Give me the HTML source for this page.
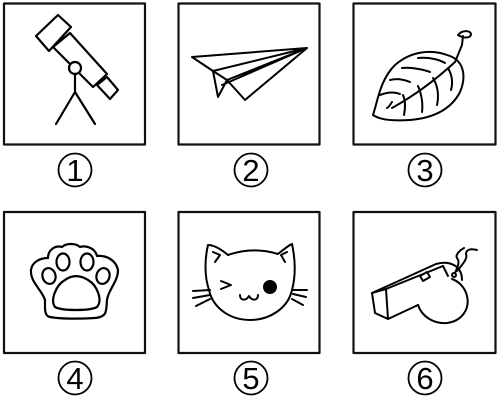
<!DOCTYPE html>
<html><head><meta charset="utf-8"><style>html,body{margin:0;padding:0;background:#fff}svg{display:block}</style></head>
<body>
<svg width="500" height="400" viewBox="0 0 500 400" xmlns="http://www.w3.org/2000/svg" fill="none" stroke="#000" stroke-linejoin="round" stroke-linecap="round">
<g stroke-width="2.2" stroke="#111">
<rect x="4" y="3.5" width="141" height="141"/>
<rect x="178.5" y="3.5" width="141" height="141"/>
<rect x="353.5" y="3.5" width="142" height="141"/>
<rect x="4" y="212" width="141" height="141"/>
<rect x="178.5" y="212" width="141" height="141"/>
<rect x="353.5" y="212" width="142" height="141"/>
</g>
<g stroke-width="2.2">
<polygon points="36,36 58,15 71,27 49,51"/>
<polygon points="53,47 70,33 107,74 93,87"/>
<polygon points="97,85 107,77 118,90 110,99"/>
<circle cx="75" cy="68" r="6" fill="#fff"/>
<path d="M75 74 L75 92 M75 92 L56 124 M75 92 L95 124"/>
</g>
<g stroke-width="2">
<path d="M192 57 L307 48 L213 71 Z"/>
<path d="M213 71 L218 97 L227 80 Z"/>
<path d="M227 80 L307 48 M227 80 L245 100 L307 48 M222 85 L307 48"/>
</g>
<g stroke-width="2">
<path d="M373 115 C378 100 380 80 395 65 C410 52 430 48 450 56 C465 62 466 78 460 92 C452 108 435 118 410 120 C395 121 380 120 373 115 Z"/>
<path d="M392 108 C410 98 430 85 455 62 L462 45 L463 36"/>
<path d="M458 35 C462 30 470 30 471 34 C471 38 464 39 458 35 Z"/>
<path d="M390 80 C397 78 405 80 410 82 M402 68 C412 67 425 70 430 72 M418 58 C430 57 440 60 445 63 M380 95 C388 92 395 92 400 94"/>
<path d="M403 95 C406 102 405 110 404 115 M418 86 C422 95 423 105 422 112 M433 78 C438 86 439 96 437 105 M448 68 C452 75 453 83 451 90 M392 102 C390 105 389 107 387 108"/>
</g>
<g stroke-width="2.2">
<path d="M45 300 C42 290 30 282 31 270 C32 262 40 258 48 258 C48 250 55 245 62 247 C66 243 76 243 80 247 C86 245 95 248 97 256 C106 255 116 260 118 270 C118 282 108 290 107 300 C106 310 108 317 95 318 C80 319 60 319 50 317 C44 316 45 308 45 300 Z"/>
<ellipse cx="49" cy="276" rx="6.5" ry="8" transform="rotate(-15 49 276)"/>
<ellipse cx="63" cy="262" rx="6.5" ry="8.5"/>
<ellipse cx="87" cy="262" rx="6.5" ry="8.5"/>
<ellipse cx="103" cy="276" rx="6.5" ry="8" transform="rotate(15 103 276)"/>
<path d="M55 307 C50 300 56 285 65 280 C72 275 80 275 88 280 C97 285 103 300 97 307 C90 311 62 311 55 307 Z"/>
</g>
<g stroke-width="2">
<path d="M209 290 C204 275 205 258 208 245 C214 245 222 250 228 255 C245 249 262 249 278 254 C283 250 289 245 292 244 C295 258 296 275 292 290 C288 308 270 320 250 320 C230 320 213 308 209 290 Z"/>
<path d="M213 252 L220 255 L215 262 M287 252 L281 255 L285 262"/>
<path d="M193 291 L210 290 M193 298 L210 295 M196 306 L210 299 M293 290 L307 290 M293 294 L306 297 M292 299 L303 305"/>
<path d="M221 281 L231 285 L221 289"/>
<circle cx="270" cy="287" r="6" fill="#000"/>
<path d="M240 295 C240 301 246 301 249 296 C252 301 258 301 258 295"/>
</g>
<g stroke-width="2">
<path d="M372 293 L386 289 L388 319 L375 313 Z"/>
<path d="M372 293 L436 264 M386 289 L443 266 M388 319 L418 305"/>
<path d="M436 264 C450 260 462 266 462 280"/>
<path d="M418 305 C422 317 434 324 447 323 C462 321 470 309 467 296 C465 287 458 281 452 279 M443 266 L448 276"/>
<path d="M420 276 L427 272 L430 277 L423 281 Z"/>
<circle cx="454" cy="275" r="2"/>
<path d="M455 273 C458 266 460 262 457 258 C455 255 460 250 464 248 M457 271 C463 264 468 258 466 254 C466 250 470 248 477 250"/>
</g>
<g stroke-width="1.8" stroke="#000">
<circle cx="75" cy="170" r="16.5"/>
<circle cx="251" cy="170" r="16.5"/>
<circle cx="425" cy="170" r="16.5"/>
<circle cx="75" cy="378" r="16.5"/>
<circle cx="251" cy="378" r="16.5"/>
<circle cx="425" cy="378" r="16.5"/>
</g>
<g fill="#000" stroke="none" font-family="Liberation Sans, sans-serif" font-size="31" text-anchor="middle">
<text x="75" y="181">1</text>
<text x="251" y="181">2</text>
<text x="425" y="181">3</text>
<text x="75" y="389">4</text>
<text x="251" y="389">5</text>
<text x="425" y="389">6</text>
</g>
</svg>
</body></html>
